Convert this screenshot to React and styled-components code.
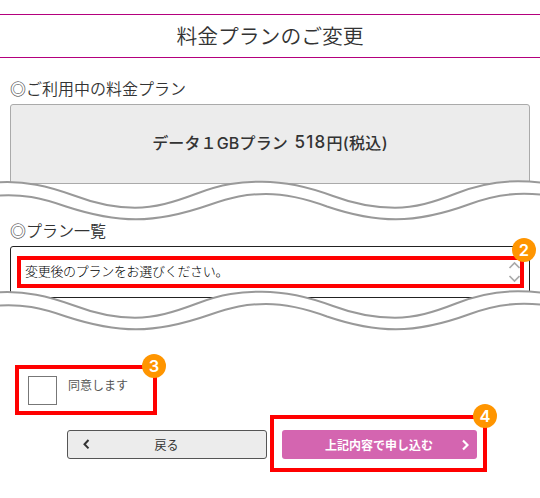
import React from "react";
import styled, { createGlobalStyle } from "styled-components";

const GlobalStyle = createGlobalStyle`
  * { box-sizing: border-box; }
  body {
    margin: 0;
    background: #fff;
    color: #333;
    font-family: "Noto Sans CJK JP", sans-serif;
  }
`;

const Page = styled.main`
  width: 540px;
  height: 498px;
  padding-top: 14px;
  overflow: hidden;
`;

const Title = styled.h1`
  height: 44px;
  margin: 0 0 20px;
  border: solid #b4007d;
  border-width: 1px 0;
  font-size: 20.8px;
  font-weight: 350;
  line-height: 41px;
  text-align: center;
`;

const Label = styled.h2`
  height: 26px;
  margin: 0 10px;
  font-size: 16px;
  font-weight: 350;
  line-height: 20px;
  white-space: nowrap;
`;

const CurrentPlan = styled.div`
  display: flex;
  align-items: center;
  justify-content: center;
  height: 80px;
  margin: 0 10px;
  padding-bottom: 4px;
  border: 1px solid #aaa;
  border-radius: 3px 3px 0 0;
  background: #ececec;
  font-family: "Inter", "Noto Sans CJK JP", sans-serif;
  font-size: 16px;
  font-weight: 500;
  white-space: pre;
`;

const Price = styled.span`
  margin-left: 2px;
  font-size: 17px;
  letter-spacing: 1.3px;
`;

const Tax = styled.span`
  letter-spacing: 0.3px;
`;

const PlanName = styled.span`
  letter-spacing: 0.15px;
`;

const WaveSvg = styled.svg`
  display: block;
  position: relative;
  width: 540px;
  height: 42px;
  margin-top: ${(p) => p.$lift}px;
  margin-bottom: -2px;
`;

const PlanBox = styled.div`
  height: 52px;
  margin: 0 10px;
  padding: 9px 5px 0 6px;
  border: 1px solid #222;
  border-radius: 3px 3px 0 0;
`;

const Highlight = styled.div`
  position: relative;
  display: flex;
  width: ${(p) => p.$w}px;
  height: ${(p) => p.$h}px;
  border: 4px solid #f00;
`;

const Badge = styled.span`
  position: absolute;
  top: ${(p) => p.$top}px;
  right: ${(p) => p.$right}px;
  width: 24px;
  height: 24px;
  border-radius: 50%;
  background: #ff9500;
  color: #fff;
  font: 600 16.5px/24px "Inter", sans-serif;
  text-align: center;
`;

const Select = styled.div`
  display: flex;
  flex: 1;
  align-items: center;
  justify-content: space-between;
  padding: 0 0 0 4px;
  color: #000;
  font-size: 13px;
  font-weight: 300;
  letter-spacing: -0.3px;
  line-height: 24px;
`;

const SelectText = styled.span`
  padding-bottom: 2px;
`;

const Sorter = styled.svg`
  width: 12px;
  height: 22px;
`;

const Consent = styled.div`
  margin: 35px 0 0 15px;
`;

const ConsentRow = styled.label`
  display: flex;
  gap: 11px;
  padding: 7px 0 0 9px;
  color: #555;
  font-size: 12px;
  line-height: 18px;
`;

const Checkbox = styled.span`
  width: 29px;
  height: 29px;
  border: 1px solid #777;
  background: #fff;
`;

const Actions = styled.div`
  display: flex;
  gap: 3px;
  padding-left: 67px;
`;

const Button = styled.button`
  display: grid;
  grid-template-columns: 20px 1fr 20px;
  align-items: center;
  width: ${(p) => (p.$primary ? 195 : 200)}px;
  height: 29px;
  margin: ${(p) => (p.$primary ? "11px 0 0 8px" : "15px 0 0")};
  padding: 0 8px;
  border: ${(p) => (p.$primary ? "0" : "1px solid #555")};
  border-radius: 3px;
  background: ${(p) => (p.$primary ? "#d465b0" : "#ececec")};
  color: ${(p) => (p.$primary ? "#fff" : "#333")};
  font-family: inherit;
  font-size: 12px;
  font-weight: ${(p) => (p.$primary ? 700 : 400)};
  line-height: 18px;
  white-space: nowrap;
`;

const ButtonText = styled.span`
  grid-column: 2;
  padding: 1px 1px 0 0;
  text-align: center;
`;

const Chevron = styled.svg`
  width: 20px;
  height: 14px;
`;

const upper =
  "M-4 10.5 C 25 8.5 48 14 74 23.5 C 99 33 120 35.7 135 35.7 C 155 35.7 173 30.5 197 21.5 C 222 12 240 9.7 262 9.7 C 288 9.7 309 15 333 24 C 357 33 377 35.7 395 35.7 C 415 35.7 433 30.5 456 21.5 C 480 12 500 9.3 518 9.3 Q 532 9.3 544 11";
const lower =
  "M-4 23.7 C 22 21.5 41 26 66 34.5 C 92 43 115 47.3 136 47.3 C 160 47.3 183 42 209 33 C 232 25 246 22 266 22 C 286 22 304 26 327 34.5 C 352 43 375 47.3 396 47.3 C 420 47.3 444 41.5 470 32 C 490 24.5 506 21.7 524 21.7 Q 535 21.7 544 23";

function Wave({ lift }) {
  return (
    <WaveSvg $lift={lift} viewBox="0 8 540 42">
      <path d={upper + " V50 H-4 Z"} fill="#fff" />
      <path d={upper} fill="none" stroke="#999" strokeWidth="2" />
      <path d={lower} fill="none" stroke="#999" strokeWidth="2" />
    </WaveSvg>
  );
}

export default function App() {
  return (
    <>
      <GlobalStyle />
      <Page>
        <Title>料金プランのご変更</Title>
        <Label>◎ご利用中の料金プラン</Label>
        <CurrentPlan>
          <PlanName>データ１GBプラン </PlanName>
          <Price>518</Price>
          <Tax>円(税込)</Tax>
        </CurrentPlan>
        <Wave lift={-4} />
        <Label>◎プラン一覧</Label>
        <PlanBox>
          <Highlight $w={507} $h={32}>
            <Select>
              <SelectText>変更後のプランをお選びください。</SelectText>
              <Sorter viewBox="0 0 12 22" fill="none" stroke="#aaa" strokeWidth="1.7">
                <path d="M1.5 7 L6.5 2 L11.5 7 M1.5 15 L6.5 20 L11.5 15" />
              </Sorter>
            </Select>
            <Badge $top={-22} $right={-16}>2</Badge>
          </Highlight>
        </PlanBox>
        <Wave lift={-8} />
        <Consent>
          <Highlight $w={142} $h={50}>
            <ConsentRow>
              <Checkbox />
              同意します
            </ConsentRow>
            <Badge $top={-15} $right={-13}>3</Badge>
          </Highlight>
        </Consent>
        <Actions>
          <Button>
            <Chevron viewBox="0 0 20 14" fill="none" stroke="#333" strokeWidth="2">
              <path d="M12.5 2 L8.5 6.2 L12.5 10.4" />
            </Chevron>
            <ButtonText>戻る</ButtonText>
          </Button>
          <Highlight $w={217} $h={57}>
            <Button $primary>
              <ButtonText>上記内容で申し込む</ButtonText>
              <Chevron viewBox="0 0 20 14" fill="none" stroke="#fff" strokeWidth="2.2">
                <path d="M14 2.5 L18.5 7 L14 11.5" />
              </Chevron>
            </Button>
            <Badge $top={-15} $right={-14}>4</Badge>
          </Highlight>
        </Actions>
      </Page>
    </>
  );
}
